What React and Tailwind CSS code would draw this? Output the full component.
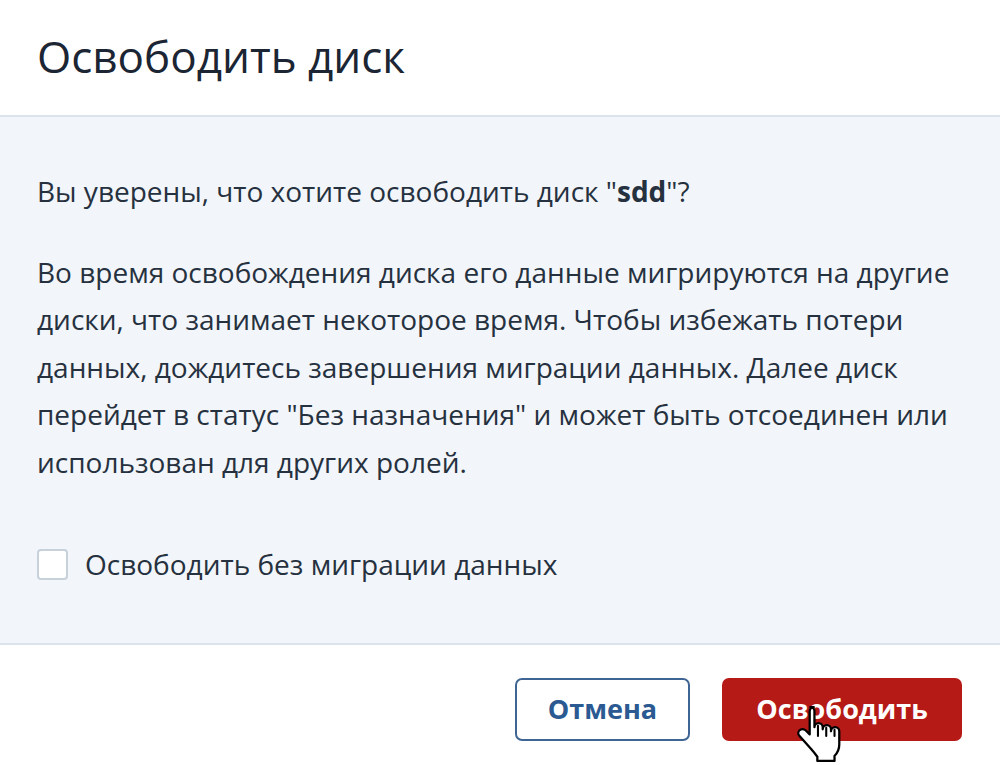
// Диалог освобождения диска: заголовок, пояснение, флажок и кнопки действий.
const font = { fontFamily: '"Open Sans", "Noto Sans", sans-serif' };

function HandCursor() {
  return (
    <svg width="46" height="60" viewBox="0 0 22 29" className="absolute left-[796px] top-[704px] pointer-events-none">
      <path
        d="M8.5 1.5c-1.1 0-2 .9-2 2v11.2l-2-2c-.8-.8-2.1-.8-2.9 0-.8.8-.8 2 0 2.8l5.6 6.3c1.4 1.6 3 3.7 3 3.7v2h8.3v-2.4c1.5-1.5 2.3-3.3 2.3-5.5v-6.4c0-1.1-.9-2-2-2s-2 .9-2 2v-1c0-1.1-.9-2-2-2s-2 .9-2 2v-1c0-1.1-.9-2-2-2s-2 .9-2 2V3.5c0-1.1-.9-2-2-2z"
        fill="#fff"
        stroke="#000"
        strokeWidth="1.1"
        strokeLinejoin="round"
      />
      <path d="M10.5 10.5v5M14.5 11.5v4M18.5 12.5v3" stroke="#000" strokeWidth="1" strokeLinecap="round" />
    </svg>
  );
}

export default function App() {
  return (
    <div className="relative w-[1000px] h-[765px] bg-white overflow-hidden text-[#263140]" style={font}>
      <div className="h-[117px] flex items-center px-[37px] border-b-2 border-[#dde3eb]">
        <h1 className="text-[44px] leading-none text-[#1b2533] mt-[-3px]">Освободить диск</h1>
      </div>

      <div className="h-[528px] bg-[#f2f5f9] px-[37px] pt-[51px] border-b-2 border-[#dde3eb]">
        <p className="text-[28px] leading-[47.5px]">
          Вы уверены, что хотите освободить диск "<span className="font-bold">sdd</span>"?
        </p>
        <p className="text-[28px] leading-[47.5px] mt-[33px] w-[930px]">
          Во время освобождения диска его данные мигрируются на другие диски, что занимает некоторое время. Чтобы избежать потери данных, дождитесь завершения миграции данных. Далее диск перейдет в статус "Без назначения" и может быть отсоединен или использован для других ролей.
        </p>
        <label className="flex items-center gap-[17px] mt-[55px] h-[47px]">
          <span className="w-[31px] h-[31px] rounded-[4px] border-2 border-[#c8d0da] bg-white shrink-0" />
          <span className="text-[28px] leading-[47.5px]">Освободить без миграции данных</span>
        </label>
      </div>

      <div className="flex justify-end gap-[32px] pt-[33px] pr-[38px]">
        <button className="w-[175px] h-[63px] rounded-[7px] border-2 border-[#3f6594] bg-white text-[27px] font-bold text-[#2b5a92]">
          Отмена
        </button>
        <button className="w-[240px] h-[63px] rounded-[7px] bg-[#b51a17] text-[27px] font-bold text-white">
          Освободить
        </button>
      </div>

      <HandCursor />
    </div>
  );
}
